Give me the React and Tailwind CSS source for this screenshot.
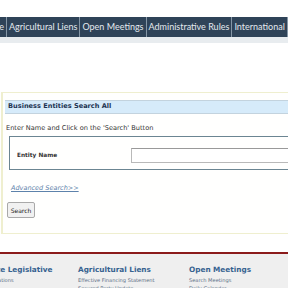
import React from 'react';

const navItems = ['Home', 'Agricultural Liens', 'Open Meetings', 'Administrative Rules', 'International'];

const footerCols = [
    { title: 'State Legislative', links: ['Publications'], ml: '-ml-[17px]' },
    { title: 'Agricultural Liens', links: ['Effective Financing Statement', 'Secured Party Update'] },
    { title: 'Open Meetings', links: ['Search Meetings', 'Daily Calendar'] },
];

export default function App() {
    return (
        <div className="w-[288px] h-[288px] overflow-hidden bg-white font-['DejaVu_Sans',sans-serif]">
            <div className="h-[17px] bg-white" />

            {/* top nav */}
            <nav className="h-[20px] bg-[#2f4358] flex items-stretch whitespace-nowrap font-['Lato',sans-serif] text-[9px] text-[#e4e9ee]">
                {navItems.map((item, i) => (
                    <div
                        key={item}
                        className={`flex items-center px-[2px] border-r border-[#8596a6] ${i === 0 ? '-ml-[22px]' : ''}`}
                    >
                        {item}
                    </div>
                ))}
            </nav>
            <div className="h-[6px] bg-[#e8ecef]" />

            <div className="h-[49px]" />

            {/* search panel */}
            <div className="ml-[1px] h-[142px] border-y border-l-2 border-[#efefcf] bg-[#fffffe] pl-[2px] pt-[7px]">
                <div className="h-[14px] bg-[#d6ebfa] border-y border-[#c3d3de] flex items-center pl-[3px] text-[6.6px] font-bold text-[#1d3452]">
                    Business Entities Search All
                </div>
                <div className="mt-[10px] pl-[1px] text-[6.6px] leading-[8px] text-[#333]">
                    Enter Name and Click on the 'Search' Button
                </div>
                <div className="mt-[4px] ml-[4px] h-[34px] border border-[#6b8592] border-r-0 flex items-start pt-[11px]">
                    <div className="w-[121px] pl-[7px] pt-[3px] text-[5.8px] leading-[8px] font-bold text-[#333]">Entity Name</div>
                    <div className="flex-1 h-[15px] border border-[#b9b9b9] border-t-[#999] border-r-0 bg-white" />
                </div>
                <div className="mt-[14px] pl-[6px] text-[6.5px] leading-[8px] italic underline text-[#5d82ab]">
                    Advanced Search&gt;&gt;
                </div>
                <button className="block mt-[10px] ml-[2px] h-[16px] w-[28px] rounded-[2px] border border-[#a9a9a9] bg-[#f1f1f1] text-[6px] text-[#222]">
                    Search
                </button>
            </div>

            <div className="h-[18px] bg-white" />

            {/* footer */}
            <div className="h-[2px] bg-[#8b1b1b]" />
            <div className="h-[40px] bg-[#efefef] pt-[11px] flex">
                {footerCols.map((col, i) => (
                    <div key={col.title} className={`flex flex-col ${i === 0 ? 'w-[78px]' : i === 1 ? 'w-[111px]' : ''}`}>
                        <div className={`text-[7.3px] font-bold text-[#36628f] leading-[10px] whitespace-nowrap ${col.ml || ''}`}>
                            {col.title}
                        </div>
                        <div className="h-[1px]" />
                        {col.links.map(l => (
                            <div key={l} className={`text-[5.1px] text-[#5e7087] leading-[8px] whitespace-nowrap ${col.ml || ''}`}>
                                {l}
                            </div>
                        ))}
                    </div>
                ))}
            </div>
        </div>
    );
}
